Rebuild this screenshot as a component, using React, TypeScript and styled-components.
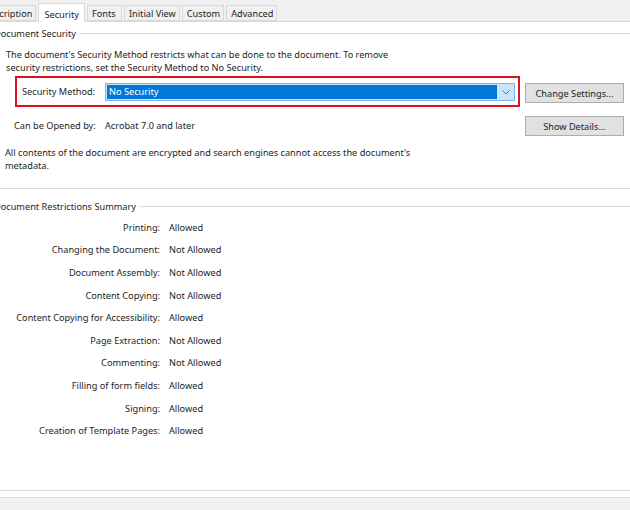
import React from "react";
import styled, { createGlobalStyle } from "styled-components";

const GlobalStyle = createGlobalStyle`
  html, body {
    margin: 0;
    padding: 0;
    background: #ffffff;
  }
  body {
    font-family: "Noto Sans", "Open Sans", sans-serif;
    font-size: 9.2px;
    color: #1e1e1e;
  }
`;

const TABS = ["Description", "Security", "Fonts", "Initial View", "Custom", "Advanced"];

const RESTRICTIONS: [string, string][] = [
  ["Printing:", "Allowed"],
  ["Changing the Document:", "Not Allowed"],
  ["Document Assembly:", "Not Allowed"],
  ["Content Copying:", "Not Allowed"],
  ["Content Copying for Accessibility:", "Allowed"],
  ["Page Extraction:", "Not Allowed"],
  ["Commenting:", "Not Allowed"],
  ["Filling of form fields:", "Allowed"],
  ["Signing:", "Allowed"],
  ["Creation of Template Pages:", "Allowed"],
];

const App: React.FC = (): JSX.Element => {
  return (
    <Page>
      <GlobalStyle />
      <TabStrip>
        {TABS.map((name, i) => (
          <Tab key={name} active={name === "Security"} first={i === 0}>
            {name}
          </Tab>
        ))}
      </TabStrip>
      <Body>
        <Inner>
          <SecurityGroup>
            <GroupTitle>
              <span>Document Security</span>
            </GroupTitle>
            <Paragraph>
              The document's Security Method restricts what can be done to the
              document. To remove
              <br />
              security restrictions, set the Security Method to No Security.
            </Paragraph>
            <MethodRow>
              <Highlight>
                <FieldLabel>Security Method:</FieldLabel>
                <Select>
                  <SelectValue>No Security</SelectValue>
                  <SelectArrow>
                    <svg width="8" height="5" viewBox="0 0 8 5">
                      <path
                        d="M0.5 0.5 L4 4 L7.5 0.5"
                        fill="none"
                        stroke="#5b7085"
                        strokeWidth="1"
                      />
                    </svg>
                  </SelectArrow>
                </Select>
              </Highlight>
              <Button top={7}>Change Settings...</Button>
            </MethodRow>
            <OpenedRow>
              <OpenedLabel>Can be Opened by:</OpenedLabel>
              <OpenedValue>Acrobat 7.0 and later</OpenedValue>
              <Button top={9}>Show Details...</Button>
            </OpenedRow>
            <Note>
              All contents of the document are encrypted and search engines
              cannot access the document's
              <br />
              metadata.
            </Note>
          </SecurityGroup>
          <SummaryGroup>
            <GroupTitle>
              <span>Document Restrictions Summary</span>
            </GroupTitle>
            <RestrictionGrid>
              {RESTRICTIONS.map(([label, value]) => (
                <React.Fragment key={label}>
                  <RestrictionLabel>{label}</RestrictionLabel>
                  <RestrictionValue>{value}</RestrictionValue>
                </React.Fragment>
              ))}
            </RestrictionGrid>
          </SummaryGroup>
        </Inner>
      </Body>
      <Footer />
    </Page>
  );
};

const Page = styled.div`
  width: 630px;
  height: 510px;
  overflow: hidden;
  display: flex;
  flex-direction: column;
  background: #ffffff;
`;

const TabStrip = styled.div`
  height: 22px;
  flex: none;
  display: flex;
  align-items: flex-end;
  background: #f0f0f0;
  border-bottom: 1px solid #d9d9d9;
  box-sizing: border-box;
`;

const Tab = styled.div<{ active?: boolean; first?: boolean }>`
  box-sizing: border-box;
  min-width: 35px;
  height: ${(p) => (p.active ? "19px" : "16px")};
  margin-bottom: ${(p) => (p.active ? "-1px" : "0")};
  margin-left: ${(p) => (p.first ? "-22px" : "0")};
  padding: ${(p) => (p.active ? "4px 5px 0" : "1px 3px 0 4px")};
  margin-right: 2px;
  display: flex;
  align-items: ${(p) => (p.active ? "flex-start" : "center")};
  background: ${(p) => (p.active ? "#ffffff" : "#f0f0f0")};
  border: 1px solid #d9d9d9;
  border-bottom: ${(p) => (p.active ? "none" : "1px solid #d9d9d9")};
  white-space: nowrap;
  color: #1e1e1e;
`;

const Body = styled.div`
  flex: 1;
  display: flex;
  flex-direction: column;
  background: #ffffff;
  overflow: hidden;
`;

const Inner = styled.div`
  flex: 1;
  margin-left: -15px;
  width: 655px;
  display: flex;
  flex-direction: column;
`;

const Group = styled.div`
  box-sizing: border-box;
  border: 1px solid #dcdcdc;
  border-top: none;
`;

const SecurityGroup = styled(Group)`
  margin-top: 5px;
  padding: 0 15px 16px 20px;
`;

const SummaryGroup = styled(Group)`
  margin-top: 11px;
  margin-bottom: 6px;
  flex: 1;
`;

const GroupTitle = styled.div`
  height: 13px;
  display: flex;
  align-items: center;
  margin: 0 -15px 0 -20px;
  &::before {
    content: "";
    width: 8px;
    height: 1px;
    background: #dcdcdc;
  }
  &::after {
    content: "";
    flex: 1;
    height: 1px;
    margin-left: 3px;
    background: #dcdcdc;
  }
  span {
    line-height: 13px;
  }
  ${SummaryGroup} & {
    margin: 0;
  }
`;

const Paragraph = styled.div`
  margin-top: 8px;
  line-height: 13px;
`;

const MethodRow = styled.div`
  display: flex;
  align-items: flex-start;
  margin-top: 2px;
`;

const Highlight = styled.div`
  box-sizing: border-box;
  width: 506px;
  height: 31px;
  margin-left: 9px;
  margin-right: 5px;
  padding: 5px 3px 0 5px;
  border: 2px solid #d9141e;
  display: flex;
  align-items: flex-start;
`;

const FieldLabel = styled.div`
  width: 83px;
  height: 18px;
  line-height: 18px;
  flex: none;
`;

const Select = styled.div`
  flex: 1;
  height: 18px;
  box-sizing: border-box;
  border: 1px solid #7eb4ea;
  display: flex;
  background: #cce4f7;
`;

const SelectValue = styled.div`
  flex: 1;
  margin: 1px 0 1px 1px;
  padding-left: 2px;
  background: #0078d7;
  color: #ffffff;
  line-height: 14px;
`;

const SelectArrow = styled.div`
  width: 17px;
  display: flex;
  align-items: center;
  justify-content: center;
`;

const Button = styled.div<{ top: number }>`
  box-sizing: border-box;
  width: 99px;
  height: 20px;
  margin-top: ${(p) => p.top}px;
  flex: none;
  display: flex;
  align-items: center;
  justify-content: center;
  background: #e1e1e1;
  border: 1px solid #adadad;
  color: #1e1e1e;
`;

const OpenedRow = styled.div`
  display: flex;
  align-items: center;
`;

const OpenedLabel = styled.div`
  margin-left: 8px;
  width: 91px;
  margin-top: 7px;
`;

const OpenedValue = styled.div`
  flex: 1;
  margin-top: 7px;
`;

const Note = styled.div`
  margin-top: 10px;
  margin-left: -1px;
  line-height: 13px;
`;

const RestrictionGrid = styled.div`
  display: grid;
  grid-template-columns: 174px auto;
  column-gap: 9px;
  grid-auto-rows: 22.6px;
  align-items: center;
  margin-top: 3px;
`;

const RestrictionLabel = styled.div`
  text-align: right;
  white-space: nowrap;
`;

const RestrictionValue = styled.div`
  white-space: nowrap;
`;

const Footer = styled.div`
  height: 13px;
  flex: none;
  background: #f0f0f0;
  border-top: 1px solid #dcdcdc;
  box-sizing: border-box;
`;

export default App;
